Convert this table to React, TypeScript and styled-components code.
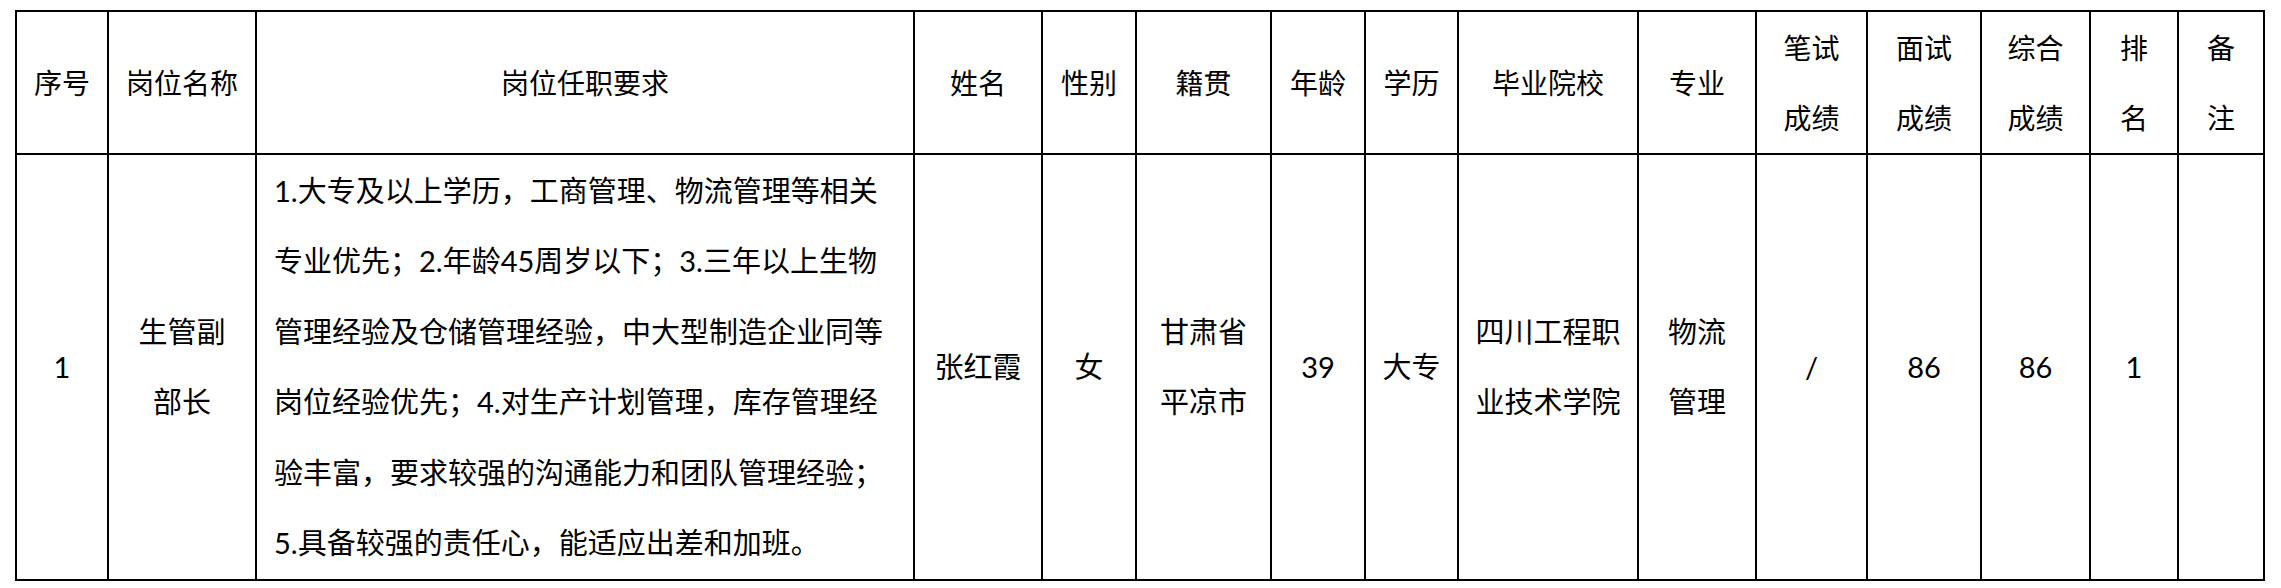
import React from 'react';
import styled, { createGlobalStyle } from 'styled-components';

const GlobalStyle = createGlobalStyle`
  html, body {
    margin: 0;
    padding: 0;
    background: #ffffff;
  }
`;

const Page = styled.div`
  padding: 10px 0 0 15px;
  font-family: Lato, "Noto Sans CJK SC", sans-serif;
  color: #000000;
`;

const Table = styled.table`
  border-collapse: collapse;
  table-layout: fixed;
  width: 2250px;
`;

const Col = styled.col<{ $width: number }>`
  width: ${(p) => p.$width}px;
`;

const HeadRow = styled.tr`
  height: 143px;
`;

const BodyRow = styled.tr`
  height: 426px;
`;

const HeadCell = styled.th`
  border: 2px solid #000000;
  padding: 0;
  font-size: 28px;
  font-weight: 400;
  line-height: 70px;
  text-align: center;
  vertical-align: middle;
  white-space: nowrap;
`;

const BodyCell = styled.td<{ $left?: boolean }>`
  border: 2px solid #000000;
  padding: 0 0 0 ${(p) => (p.$left ? 17 : 0)}px;
  font-size: 29px;
  font-weight: 400;
  line-height: 70.5px;
  text-align: ${(p) => (p.$left ? 'left' : 'center')};
  vertical-align: middle;
  white-space: nowrap;
`;

const Line = styled.div`
  display: block;
`;

type Column = {
  width: number;
  head: string[];
  body: string[];
  left?: boolean;
};

const columns: Column[] = [
  { width: 92, head: ['序号'], body: ['1'] },
  { width: 148, head: ['岗位名称'], body: ['生管副', '部长'] },
  {
    width: 658,
    head: ['岗位任职要求'],
    left: true,
    body: [
      '1.大专及以上学历，工商管理、物流管理等相关',
      '专业优先；2.年龄45周岁以下；3.三年以上生物',
      '管理经验及仓储管理经验，中大型制造企业同等',
      '岗位经验优先；4.对生产计划管理，库存管理经',
      '验丰富，要求较强的沟通能力和团队管理经验；',
      '5.具备较强的责任心，能适应出差和加班。',
    ],
  },
  { width: 128, head: ['姓名'], body: ['张红霞'] },
  { width: 94, head: ['性别'], body: ['女'] },
  { width: 135, head: ['籍贯'], body: ['甘肃省', '平凉市'] },
  { width: 94, head: ['年龄'], body: ['39'] },
  { width: 93, head: ['学历'], body: ['大专'] },
  { width: 180, head: ['毕业院校'], body: ['四川工程职', '业技术学院'] },
  { width: 118, head: ['专业'], body: ['物流', '管理'] },
  { width: 111, head: ['笔试', '成绩'], body: ['/'] },
  { width: 114, head: ['面试', '成绩'], body: ['86'] },
  { width: 109, head: ['综合', '成绩'], body: ['86'] },
  { width: 88, head: ['排', '名'], body: ['1'] },
  { width: 86, head: ['备', '注'], body: [] },
];

function App() {
  return (
    <Page>
      <GlobalStyle />
      <Table>
        <colgroup>
          {columns.map((column, index) => (
            <Col key={index} $width={column.width} />
          ))}
        </colgroup>
        <thead>
          <HeadRow>
            {columns.map((column, index) => (
              <HeadCell key={index}>
                {column.head.map((line) => (
                  <Line key={line}>{line}</Line>
                ))}
              </HeadCell>
            ))}
          </HeadRow>
        </thead>
        <tbody>
          <BodyRow>
            {columns.map((column, index) => (
              <BodyCell key={index} $left={column.left}>
                {column.body.map((line) => (
                  <Line key={line}>{line}</Line>
                ))}
              </BodyCell>
            ))}
          </BodyRow>
        </tbody>
      </Table>
    </Page>
  );
}

export default App;
